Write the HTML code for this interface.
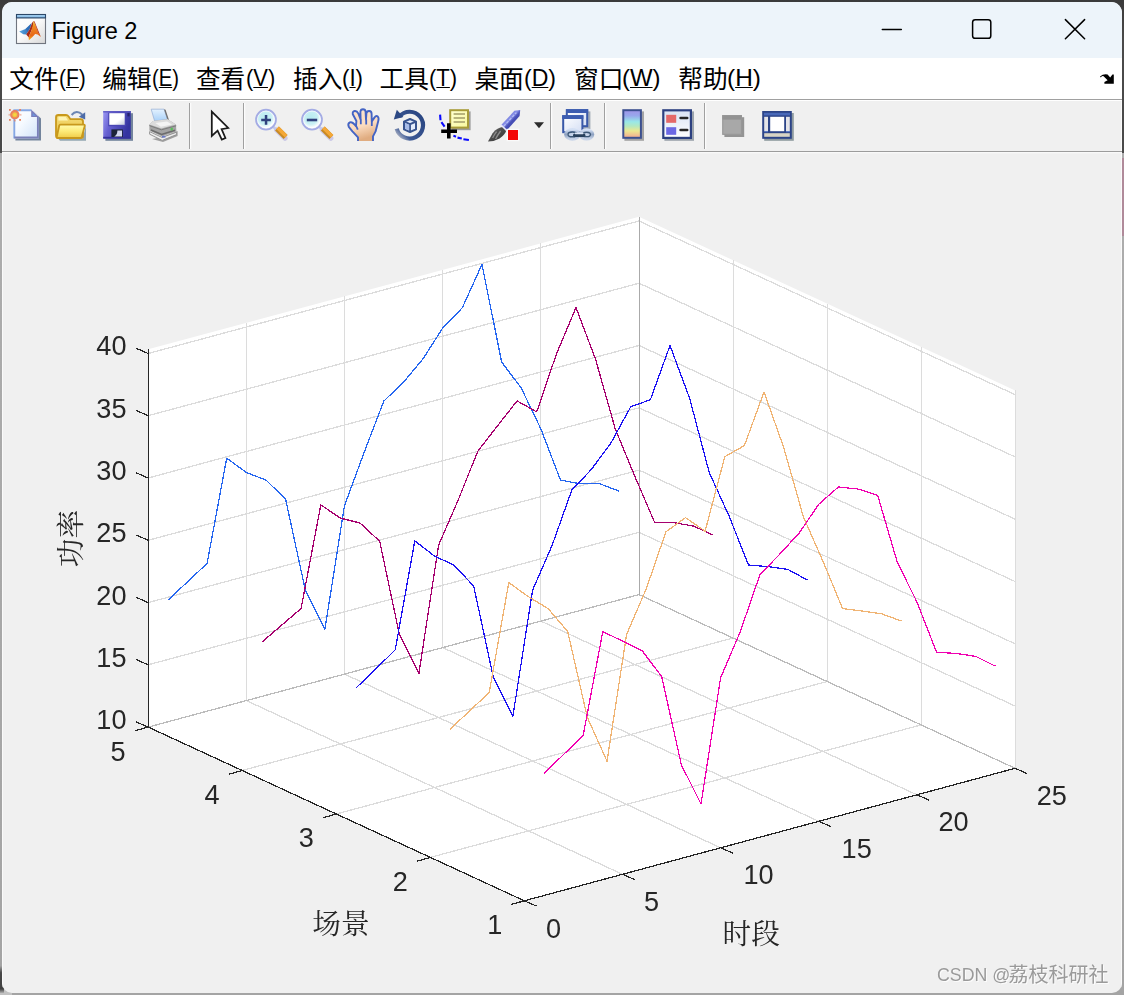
<!DOCTYPE html>
<html lang="zh-CN">
<head>
<meta charset="utf-8">
<title>Figure 2</title>
<style>
html,body{margin:0;padding:0}
body{width:1124px;height:995px;overflow:hidden;position:relative;
  background:linear-gradient(to bottom,#3a3a3a 0,#4a4a4a 40px,#4a4a4a 152.5px,#adadad 153.5px,#a4a4a4 100%);
  font-family:"Liberation Sans","Noto Sans CJK SC",sans-serif;}
.rb{position:absolute;left:1122px;top:158px;width:2px;height:78px;background:#b08a9a}
.win{position:absolute;left:2px;top:2px;width:1120px;height:991px;border-radius:10px 11px 10px 10px;background:#f0f0f0;overflow:hidden}
.title{position:absolute;left:0;top:0;width:1120px;height:55.5px;background:#edf4fa}
.title .cap{position:absolute;left:49.4px;top:15.3px;font-size:23.6px;line-height:28px;color:#000;letter-spacing:-0.08px;white-space:nowrap}
.menubar{position:absolute;left:0;top:55.5px;width:1120px;height:42px;background:#fff}
.menubar span{position:absolute;top:6px;font-size:24px;line-height:30px;color:#000;white-space:nowrap;transform-origin:0 0}
.menubar u{text-decoration:underline;text-underline-offset:1px;text-decoration-thickness:1.2px}
.menubar span.mc{font-size:24.7px;top:7.5px}
.menubar span.ml{top:5.6px}
.sep1{position:absolute;left:0;top:96.8px;width:1120px;height:1.3px;background:#a0a0a0}
.toolbar{position:absolute;left:0;top:98.1px;width:1120px;height:50.7px;background:#f0f0f0;border-top:1.2px solid #fff;box-sizing:border-box}
.sep2{position:absolute;left:0;top:148.8px;width:1120px;height:1.2px;background:#9c9c9c;box-shadow:0 1.2px 0 #fcfcfc}
.hl{position:absolute;top:99px;width:1px;height:892px;background:#fafafa}
.dk{position:absolute;left:0;top:966px;width:4px;height:27px;background:linear-gradient(to bottom,#a2a2a2,#484848 25%,#404040 85%,#b0b0b0)}
.lc{position:absolute;left:0;top:989px;width:12px;height:6px;background:#c2c2c2}
.vsep{position:absolute;top:1.5px;width:1.2px;height:46.2px;background:#a0a0a0;box-shadow:1.2px 0 0 #fff}
svg.ovl{position:absolute;left:0;top:0}
svg.plot{position:absolute;left:0;top:0;will-change:transform}
.wm{position:absolute;left:937px;top:961.1px;font-size:17.8px;line-height:26px;color:#9a9a9a;text-shadow:1px 1px 0 #fcfcfc;white-space:nowrap}
.wm b{font-weight:normal;font-size:20px;position:relative;top:1.3px;left:-1.8px}
</style>
</head>
<body>
<div class="rb"></div><div class="lc"></div><div class="dk"></div>
<div class="win">
  <div class="title"><div class="cap">Figure 2</div></div>
  <div class="menubar">
    <span class="mc" style="left:7.3px">文件</span><span class="ml" style="left:57.1px;transform:scaleX(0.875)">(<u>F</u>)</span>
    <span class="mc" style="left:100.2px">编辑</span><span class="ml" style="left:149.9px;transform:scaleX(0.841)">(<u>E</u>)</span>
    <span class="mc" style="left:193.9px">查看</span><span class="ml" style="left:243.6px;transform:scaleX(0.913)">(<u>V</u>)</span>
    <span class="mc" style="left:291.0px">插入</span><span class="ml" style="left:340.2px;transform:scaleX(0.927)">(<u>I</u>)</span>
    <span class="mc" style="left:377.5px">工具</span><span class="ml" style="left:427.2px;transform:scaleX(0.920)">(<u>T</u>)</span>
    <span class="mc" style="left:472.4px">桌面</span><span class="ml" style="left:522.2px;transform:scaleX(0.961)">(<u>D</u>)</span>
    <span class="mc" style="left:572.0px">窗口</span><span class="ml" style="left:620.4px;transform:scaleX(0.997)">(<u>W</u>)</span>
    <span class="mc" style="left:676.2px">帮助</span><span class="ml" style="left:724.9px;transform:scaleX(1.018)">(<u>H</u>)</span>
  </div>
  <div class="sep1"></div>
  <div class="toolbar">
    <div class="vsep" style="left:186.85px"></div>
    <div class="vsep" style="left:240.8px"></div>
    <div class="vsep" style="left:547.9px"></div>
    <div class="vsep" style="left:602.1px"></div>
    <div class="vsep" style="left:701.9px"></div>
  </div>
  <div class="hl" style="left:0"></div><div class="hl" style="left:1119px"></div>
  <div class="sep2"></div>
</div>
<svg class="plot" width="1124" height="995" viewBox="0 0 1124 995">
<polygon points="148.2,727.1 148.2,349.3 639,216.8 1015.1,390.4 1015.1,768.3 524.3,900.8" fill="#fff"/>
<g stroke="#dcdcdc" stroke-width="1.3" shape-rendering="crispEdges" fill="none">
<line stroke-width="1" x1="246.5" y1="700.6" x2="246.5" y2="322.8"/>
<line stroke-width="1" x1="344.5" y1="674.1" x2="344.5" y2="296.3"/>
<line stroke-width="1" x1="442.5" y1="647.6" x2="442.5" y2="269.8"/>
<line stroke-width="1" x1="540.5" y1="621.1" x2="540.5" y2="243.3"/>
<line x1="148.2" y1="664.8" x2="639" y2="532.3"/>
<line x1="148.2" y1="602.6" x2="639" y2="470.1"/>
<line x1="148.2" y1="540.3" x2="639" y2="407.8"/>
<line x1="148.2" y1="478" x2="639" y2="345.5"/>
<line x1="148.2" y1="415.7" x2="639" y2="283.2"/>
<line x1="148.2" y1="353.5" x2="639" y2="221"/>
<line stroke-width="1" x1="921.5" y1="724.9" x2="921.5" y2="347"/>
<line stroke-width="1" x1="827.5" y1="681.5" x2="827.5" y2="303.6"/>
<line stroke-width="1" x1="733.5" y1="638" x2="733.5" y2="260.2"/>
<line x1="639" y1="532.3" x2="1015.1" y2="706"/>
<line x1="639" y1="470.1" x2="1015.1" y2="643.8"/>
<line x1="639" y1="407.8" x2="1015.1" y2="581.5"/>
<line x1="639" y1="345.5" x2="1015.1" y2="519.2"/>
<line x1="639" y1="283.2" x2="1015.1" y2="456.9"/>
<line x1="639" y1="221" x2="1015.1" y2="394.6"/>
<line x1="622.5" y1="874.3" x2="246.4" y2="700.6"/>
<line x1="720.6" y1="847.8" x2="344.5" y2="674.1"/>
<line x1="818.8" y1="821.3" x2="442.7" y2="647.6"/>
<line x1="916.9" y1="794.8" x2="540.9" y2="621.1"/>
<line x1="430.3" y1="857.4" x2="921.1" y2="724.9"/>
<line x1="336.3" y1="814" x2="827.1" y2="681.5"/>
<line x1="242.2" y1="770.5" x2="733" y2="638"/>
<line stroke-width="1" x1="1015.5" y1="768.3" x2="1015.5" y2="390.4"/>
</g>
<g stroke="#bcbcbc" stroke-width="1.3" shape-rendering="crispEdges" fill="none">
<line x1="148.2" y1="727.1" x2="639" y2="594.6"/>
<line x1="639" y1="594.6" x2="1015.1" y2="768.3"/>
<line stroke="#aaaaaa" stroke-width="1" x1="639.5" y1="594.6" x2="639.5" y2="216.8"/>
</g>
<g stroke="#262626" stroke-width="1.25" fill="none" shape-rendering="crispEdges">
<line x1="148.2" y1="727.1" x2="148.2" y2="349.3"/>
<line x1="148.2" y1="727.1" x2="524.3" y2="900.8"/>
<line x1="524.3" y1="900.8" x2="1015.1" y2="768.3"/>
<line x1="148.2" y1="727.1" x2="136" y2="721.8"/>
<line x1="148.2" y1="664.8" x2="136" y2="659.5"/>
<line x1="148.2" y1="602.6" x2="136" y2="597.3"/>
<line x1="148.2" y1="540.3" x2="136" y2="535"/>
<line x1="148.2" y1="478" x2="136" y2="472.7"/>
<line x1="148.2" y1="415.7" x2="136" y2="410.4"/>
<line x1="148.2" y1="353.5" x2="136" y2="348.2"/>
<line x1="524.3" y1="900.8" x2="510.8" y2="904.6"/>
<line x1="430.3" y1="857.4" x2="416.8" y2="861.2"/>
<line x1="336.3" y1="814" x2="322.8" y2="817.8"/>
<line x1="242.2" y1="770.5" x2="228.7" y2="774.3"/>
<line x1="148.2" y1="727.1" x2="134.7" y2="730.9"/>
<line x1="524.3" y1="900.8" x2="536.5" y2="906.1"/>
<line x1="622.5" y1="874.3" x2="634.7" y2="879.6"/>
<line x1="720.6" y1="847.8" x2="732.8" y2="853.1"/>
<line x1="818.8" y1="821.3" x2="831" y2="826.6"/>
<line x1="916.9" y1="794.8" x2="929.1" y2="800.1"/>
<line x1="1015.1" y1="768.3" x2="1027.3" y2="773.6"/>
</g>
<g font-family="'Liberation Sans', Arial, sans-serif" font-size="27.1" fill="#262626">
<text x="126.5" y="729.1" text-anchor="end">10</text>
<text x="126.5" y="666.8" text-anchor="end">15</text>
<text x="126.5" y="604.5" text-anchor="end">20</text>
<text x="126.5" y="542.2" text-anchor="end">25</text>
<text x="126.5" y="480" text-anchor="end">30</text>
<text x="126.5" y="417.7" text-anchor="end">35</text>
<text x="126.5" y="355.4" text-anchor="end">40</text>
<text x="502.4" y="934" text-anchor="end">1</text>
<text x="407.8" y="890.6" text-anchor="end">2</text>
<text x="313.8" y="847.2" text-anchor="end">3</text>
<text x="219.7" y="803.7" text-anchor="end">4</text>
<text x="125.7" y="761.3" text-anchor="end">5</text>
<text x="545.9" y="937.8" text-anchor="start">0</text>
<text x="644.1" y="910.6" text-anchor="start">5</text>
<text x="743.4" y="884.1" text-anchor="start">10</text>
<text x="841.6" y="857.6" text-anchor="start">15</text>
<text x="938.5" y="831.1" text-anchor="start">20</text>
<text x="1036.7" y="804.6" text-anchor="start">25</text>
</g>
<g font-family="'Liberation Serif', 'Noto Serif CJK SC', serif" font-size="28.7" fill="#262626" text-anchor="middle">
<text x="340.9" y="933.6">场景</text>
<text x="751.2" y="943.9">时段</text>
<text transform="translate(80.7,538.5) rotate(-90)">功率</text>
</g>
<g fill="none" stroke-width="1.25" stroke-linejoin="round" shape-rendering="crispEdges">
<polyline stroke="#2566f0" points="167.9,600.2 187.5,581.8 207.1,563.4 226.7,458.2 246.4,472.5 266,480.1 285.6,499.1 305.3,590 324.9,629.3 344.5,505.6 364.2,452.2 383.8,401.1 403.4,382.3 423.1,358.7 442.7,328 462.3,307.8 482,264.3 501.6,362 521.2,388 540.9,429 560.5,480.1 580.1,483.8 599.8,483.8 619.4,491.2"/>
<polyline stroke="#a6006e" points="261.9,642.1 281.5,625.3 301.1,608.5 320.8,504.9 340.4,518.1 360,523 379.7,541.3 399.3,634.2 418.9,673.5 438.6,545.1 458.2,500 477.8,451.2 497.5,425.8 517.1,400.9 536.7,411.9 556.4,354.1 576,307.5 595.6,359.4 615.2,428.8 634.9,476.5 654.5,522.2 674.1,522.7 693.8,526.1 713.4,535.2"/>
<polyline stroke="#1c12f2" points="355.9,688.1 375.5,669.2 395.2,649.9 414.8,540.9 434.4,556 454.1,565.2 473.7,586.1 493.3,677.2 512.9,716.2 532.6,590.2 552.2,545.1 571.8,490.1 591.5,469.3 611.1,442.7 630.7,406.8 650.4,399.7 670,345.5 689.6,398.2 709.3,472.8 728.9,515.6 748.5,565 768.2,566.6 787.8,569.4 807.4,580"/>
<polyline stroke="#f0b474" points="449.9,729.3 469.5,711 489.2,692.5 508.8,582.6 528.4,596.7 548.1,608.6 567.7,631.5 587.3,717.3 607,761.2 626.6,634.4 646.2,589 665.9,531.9 685.5,517.6 705.1,531.2 724.8,456.7 744.4,445.6 764,392 783.7,447.5 803.3,516.6 822.9,561.1 842.6,608.6 862.2,611 881.8,613.9 901.4,621"/>
<polyline stroke="#f000b0" points="543.9,773.4 563.6,754.5 583.2,735.3 602.8,631.6 622.5,641.1 642.1,650.6 661.7,676.7 681.4,764.9 701,804 720.6,677.9 740.3,631.6 759.9,574.7 779.5,554.4 799.1,533.1 818.8,504.2 838.4,487 858,489 877.7,495.5 897.3,562.3 916.9,601.9 936.6,652.3 956.2,653.4 975.8,656.4 995.5,666.2"/>
</g>
</svg>
<svg class="ovl" width="1124" height="160" viewBox="0 0 1124 160">
<defs>
  <linearGradient id="gTb" x1="0" y1="0" x2="0" y2="1"><stop offset="0" stop-color="#b4dcf8"/><stop offset="1" stop-color="#78b0e0"/></linearGradient>
  <linearGradient id="gIc" x1="0" y1="0" x2="1" y2="1"><stop offset="0" stop-color="#ffffff"/><stop offset="0.45" stop-color="#fafafa"/><stop offset="1" stop-color="#d8d8d8"/></linearGradient>
  <linearGradient id="gWing" x1="0" y1="0" x2="1" y2="0"><stop offset="0" stop-color="#58a8e0"/><stop offset="1" stop-color="#2a64b0"/></linearGradient>
  <linearGradient id="gPeak" x1="0" y1="0" x2="0" y2="1"><stop offset="0" stop-color="#f8d020"/><stop offset="0.3" stop-color="#f08820"/><stop offset="0.75" stop-color="#e86818"/><stop offset="1" stop-color="#f8b818"/></linearGradient>
  <linearGradient id="gDoc" x1="0" y1="0" x2="1" y2="1"><stop offset="0" stop-color="#ffffff"/><stop offset="0.4" stop-color="#f6faff"/><stop offset="1" stop-color="#cfe2f8"/></linearGradient>
  <radialGradient id="gSun" cx="0.5" cy="0.5" r="0.5"><stop offset="0" stop-color="#f8e040"/><stop offset="0.45" stop-color="#f0c040"/><stop offset="0.6" stop-color="#ec8a5c"/><stop offset="1" stop-color="#e87858"/></radialGradient>
  <linearGradient id="gFoldB" x1="0" y1="0" x2="0" y2="1"><stop offset="0" stop-color="#f4dc78"/><stop offset="1" stop-color="#e8c040"/></linearGradient>
  <linearGradient id="gFoldF" x1="0" y1="0" x2="0" y2="1"><stop offset="0" stop-color="#fffcb0"/><stop offset="0.5" stop-color="#fcea78"/><stop offset="1" stop-color="#f0cc48"/></linearGradient>
  <linearGradient id="gFlop" x1="0" y1="0" x2="1" y2="0.3"><stop offset="0" stop-color="#9c98f4"/><stop offset="0.35" stop-color="#6660d0"/><stop offset="1" stop-color="#3434a0"/></linearGradient>
  <linearGradient id="gLab" x1="0" y1="0" x2="1" y2="1"><stop offset="0" stop-color="#ffffff"/><stop offset="0.6" stop-color="#ffffff"/><stop offset="1" stop-color="#c4ccdc"/></linearGradient>
  <linearGradient id="gPap" x1="0" y1="0" x2="0" y2="1"><stop offset="0" stop-color="#e4f2ff"/><stop offset="1" stop-color="#a8d0f8"/></linearGradient>
  <radialGradient id="gLens" cx="0.45" cy="0.4" r="0.6"><stop offset="0" stop-color="#b8ecf0"/><stop offset="0.55" stop-color="#c8f0f4"/><stop offset="0.85" stop-color="#ffffff"/><stop offset="1" stop-color="#e8ecff"/></radialGradient>
  <linearGradient id="gHand" x1="0" y1="0" x2="0.3" y2="1"><stop offset="0" stop-color="#fde6d0"/><stop offset="0.6" stop-color="#fbdcc0"/><stop offset="1" stop-color="#e0ac80"/></linearGradient>
  <linearGradient id="gRot" x1="0" y1="1" x2="1" y2="0"><stop offset="0" stop-color="#d0d0d4"/><stop offset="0.25" stop-color="#3c5894"/><stop offset="1" stop-color="#284480"/></linearGradient>
  <linearGradient id="gNote" x1="0" y1="0" x2="1" y2="1"><stop offset="0" stop-color="#ffffd0"/><stop offset="1" stop-color="#f8f8a0"/></linearGradient>
  <linearGradient id="gBrH" x1="0" y1="0" x2="1" y2="1"><stop offset="0" stop-color="#5058c0"/><stop offset="0.45" stop-color="#8890e8"/><stop offset="0.55" stop-color="#4850b8"/><stop offset="1" stop-color="#3038a0"/></linearGradient>
  <linearGradient id="gBrT" x1="0" y1="0" x2="1" y2="1"><stop offset="0" stop-color="#a0a0a0"/><stop offset="0.4" stop-color="#505050"/><stop offset="1" stop-color="#303030"/></linearGradient>
  <linearGradient id="gWinI" x1="0" y1="0" x2="1" y2="1"><stop offset="0" stop-color="#ffffff"/><stop offset="1" stop-color="#d4def4"/></linearGradient>
  <linearGradient id="gCb" x1="0" y1="0" x2="0" y2="1"><stop offset="0" stop-color="#a094e8"/><stop offset="0.2" stop-color="#98a8ec"/><stop offset="0.42" stop-color="#98e8e8"/><stop offset="0.58" stop-color="#b4e8c0"/><stop offset="0.75" stop-color="#ece890"/><stop offset="1" stop-color="#f4a890"/></linearGradient>
  <linearGradient id="gLeg" x1="0" y1="0" x2="0" y2="1"><stop offset="0" stop-color="#d8e2f4"/><stop offset="1" stop-color="#ffffff"/></linearGradient>
  <linearGradient id="gChain" x1="0" y1="0" x2="0" y2="1"><stop offset="0" stop-color="#d4e0f4"/><stop offset="0.5" stop-color="#8ca0c0"/><stop offset="1" stop-color="#c8d4e8"/></linearGradient>
</defs>
<g>
  <rect x="16.5" y="17.5" width="29" height="26" fill="url(#gIc)" stroke="#70757f" stroke-width="1.1"/>
  <rect x="16.5" y="14.5" width="29" height="3.4" fill="url(#gTb)" stroke="#2c4868" stroke-width="1.1"/>
  <path d="M19.2,31.6 L25.5,28.9 L31.6,23 L29.5,29.5 L26.2,34.4 L23.3,34.2 Z" fill="url(#gWing)"/>
  <path d="M25.6,28.8 L29.8,25.5 L31.6,23 L30.2,28 L27.5,31.5 Z" fill="#2c6cb8" opacity="0.7"/>
  <path d="M26.2,34.4 L29.5,29.5 L32.4,22.2 L33.6,21 L33.4,26 L31.2,31 L28.6,37.2 Z" fill="#a82c18"/>
  <path d="M28.6,37.2 L31.2,31 L33.2,24 L33.6,21 L35.6,25.6 L38.2,32.6 L40.9,37 L37.6,34.4 L35.2,33.9 L32.2,37.2 L28.9,40.3 Z" fill="url(#gPeak)"/>
  <path d="M33.6,21 L34.6,21.6 L37,27.6 L40.9,37 L38.2,32.8 L35.6,25.8 Z" fill="#b83018"/>
</g>
<g stroke="#000" stroke-width="1.5" fill="none" stroke-linecap="round">
  <line x1="882.3" y1="29.4" x2="901.3" y2="29.4"/>
  <rect x="972.6" y="19.7" width="18.2" height="18.6" rx="2.6" ry="2.6"/>
  <line x1="1065.4" y1="19.6" x2="1084.6" y2="38.8"/>
  <line x1="1084.6" y1="19.6" x2="1065.4" y2="38.8"/>
</g>
<path d="M1100,76.6 Q1103.5,73.6 1107.6,74.6 L1110.2,77.4 L1112.4,74.4 L1113.8,74.4 L1113.8,83.8 L1104.4,83.8 L1104.4,82 L1107.6,80.2 L1103.6,76.2 Q1102,75.8 1100.8,77.4 Z" fill="#000"/>
<g>
  <!-- new -->
  <path d="M15.4,111.4 H33.8 L41,118.6 V140.6 H15.4 Z" fill="#73849c"/>
  <path d="M13.4,109.4 H31.8 L38.8,116.4 V138.4 H13.4 Z" fill="url(#gDoc)"/>
  <path d="M14.3,138.4 V110.3 H31.4" fill="none" stroke="#86a8e4" stroke-width="1.9"/>
  <path d="M14.3,137.5 H37.9 V116.6" fill="none" stroke="#7a80b8" stroke-width="1.9"/>
  <path d="M31.2,109.4 L38.8,117 H31.2 Z" fill="#7a7cba"/>
  <path d="M32.6,112.8 L35.8,116 H32.6 Z" fill="#6a94dc"/>
  <g fill="#e8805c">
    <circle cx="14.8" cy="114.8" r="4.7" fill="url(#gSun)"/>
    <rect x="9" y="109" width="1.8" height="1.8"/><rect x="19.2" y="109" width="1.8" height="1.8"/>
    <rect x="8.6" y="113.9" width="1.2" height="1.8" opacity="0.6"/><rect x="20.2" y="113.9" width="1.2" height="1.8" opacity="0.6"/>
    <rect x="9" y="119" width="1.8" height="1.8"/><rect x="13.9" y="120" width="1.8" height="1.4" opacity="0.7"/><rect x="19.2" y="119" width="1.8" height="1.8"/>
  </g>
  <!-- open -->
  <path d="M58,138.6 H82.6 L86,125.6 V140.8 H60 Z" fill="#8aa0ac" opacity="0.9"/>
  <path d="M71.6,115 Q76.6,109.4 82.2,114.6" fill="none" stroke="#6c86b4" stroke-width="2"/>
  <path d="M78.8,116.8 L85.2,112.2 L85.2,119.4 Z" fill="#4e6ca8"/>
  <path d="M56,117.4 Q56,115 58.4,115 H66 Q67.6,115 68.6,116.4 L70.4,119.2 H80.6 Q83,119.2 83,121.6 V136 Q83,138 81,138 H58.4 Q56,138 56,135.6 Z" fill="url(#gFoldB)" stroke="#c8981c" stroke-width="1.8"/>
  <path d="M58.4,117 H65.8 L68,120.6 H58.4 Z" fill="#fdf4b4"/>
  <path d="M60.4,124.6 H84 Q85,124.6 84.8,125.8 L81.8,136.8 Q81.4,138 80,138 H57.6 Q56.4,138 56.8,136.8 L59.2,125.8 Q59.4,124.6 60.4,124.6 Z" fill="url(#gFoldF)" stroke="#c8981c" stroke-width="1.8"/>
  <!-- save -->
  <rect x="105.4" y="113.2" width="27.6" height="27.6" fill="#73849c"/>
  <rect x="103.2" y="111" width="27.6" height="27.6" fill="url(#gFlop)"/>
  <rect x="103.2" y="111" width="27.6" height="1.6" fill="#5c58c0" opacity="0.8"/>
  <rect x="103.2" y="136.8" width="27.6" height="1.8" fill="#34309c"/>
  <rect x="108.2" y="112.8" width="17.4" height="13.4" fill="#4a46b4"/>
  <rect x="109.3" y="113.2" width="15.4" height="11.6" fill="url(#gLab)"/>
  <rect x="127.4" y="113" width="2.2" height="3.4" fill="#26226c"/>
  <rect x="111.4" y="129.4" width="11.4" height="7.6" fill="#1c2438"/>
  <path d="M117.4,130.4 H122 V136.6 H114.2 Q117.4,134.6 117.4,130.4 Z" fill="#d4d8f0"/>
  <!-- print -->
  <path d="M152,139 L163,142 L177.6,136 L177.6,131 L163,137 Z" fill="#8c8c8c" opacity="0.8"/>
  <path d="M151.2,109.2 H164 L167.4,119.4 L154.6,121 Z" fill="url(#gPap)" stroke="#9cb4d8" stroke-width="0.8"/>
  <path d="M164,109.2 L165.6,109.8 L169,120 L167.4,119.4 Z" fill="#707070"/>
  <path d="M153,121 L167.6,119.2 L176,124.6 L176.4,131.4 L162,136.4 L149.4,130.4 L149.4,124.4 Z" fill="#a4a4a4"/>
  <path d="M153,121 L167.6,119.2 L176,124.6 L161.4,128.6 L149.4,124.4 Z" fill="#dcdcdc"/>
  <path d="M155.4,123 L167,121.4 L172.2,124.6 L160.8,126.8 Z" fill="#f4f4f4"/>
  <path d="M149.4,125.6 L161.4,129.8 L176.2,125.8" fill="none" stroke="#7c7c7c" stroke-width="1"/>
  <path d="M149.6,131.6 L162,137.4 L176.6,132.2 L176.6,134.6 L162.2,140.4 L149.6,134.2 Z" fill="#ececec" stroke="#8c8c8c" stroke-width="0.9"/>
  <path d="M151,130 L161.6,134.4 L175,130.2" fill="none" stroke="#6c6c6c" stroke-width="1.6"/>
  <rect x="170.6" y="127.8" width="2.2" height="2.6" fill="#58c058"/>
  <rect x="162" y="135.8" width="3.4" height="1.8" fill="#6878c8"/>
</g>
<g>
  <!-- pointer -->
  <path d="M211.8,111.6 V136 L217.6,130.6 L221.8,139.6 L225.4,138 L221.6,129.2 L228.2,128 Z" fill="#fff" stroke="#1a1a1a" stroke-width="1.75" stroke-linejoin="miter"/>
  <!-- zoom in -->
  <line x1="276.6" y1="130" x2="285" y2="138.2" stroke="#b4b0e0" stroke-width="5.2" stroke-linecap="round" opacity="0.6"/>
  <line x1="272.6" y1="126.2" x2="277" y2="130.4" stroke="#c4c8ec" stroke-width="2.6"/>
  <line x1="277" y1="128.6" x2="285.6" y2="137" stroke="#c88a24" stroke-width="5.6" stroke-linecap="butt"/>
  <line x1="277.6" y1="127.8" x2="286.2" y2="136.2" stroke="#f4a838" stroke-width="3.6" stroke-linecap="butt"/>
  <circle cx="266" cy="119.6" r="9.8" fill="url(#gLens)" stroke="#a4ace4" stroke-width="2.1"/>
  <circle cx="266" cy="119.6" r="8.6" fill="none" stroke="#ffffff" stroke-width="0.9" opacity="0.8"/>
  <path d="M261.2,119.9 H270.9 M266.05,115 V124.8" stroke="#30427e" stroke-width="2.5" fill="none"/>
  <!-- zoom out -->
  <line x1="322.4" y1="130" x2="330.8" y2="138.2" stroke="#b4b0e0" stroke-width="5.2" stroke-linecap="round" opacity="0.6"/>
  <line x1="318.6" y1="126.2" x2="323" y2="130.4" stroke="#c4c8ec" stroke-width="2.6"/>
  <line x1="322.8" y1="128.6" x2="331.4" y2="137" stroke="#c88a24" stroke-width="5.6" stroke-linecap="butt"/>
  <line x1="323.4" y1="127.8" x2="332" y2="136.2" stroke="#f4a838" stroke-width="3.6" stroke-linecap="butt"/>
  <circle cx="312" cy="119.6" r="9.8" fill="url(#gLens)" stroke="#a4ace4" stroke-width="2.1"/>
  <circle cx="312" cy="119.6" r="8.6" fill="none" stroke="#ffffff" stroke-width="0.9" opacity="0.8"/>
  <path d="M306.8,120 H317.2" stroke="#30427e" stroke-width="2.6" fill="none"/>
  <!-- hand -->
  <path d="M358,141 V137.4 L352.4,131.4 L348.8,126.8 Q347.4,123.6 349.8,122.4 Q352.6,121.6 356,126.2 L356.4,121 L352.8,114.2 Q352.2,111.4 354.8,111 Q357,110.8 358.4,113.6 L360.6,119.4 L360.4,111.8 Q360.6,109.2 363,109.2 Q365.4,109.2 365.6,111.8 L366,119.4 L366.4,113.4 Q366.8,110.8 369.2,111 Q371.6,111.2 371.6,113.8 L371.8,121.4 L374.4,117.6 Q376,115.4 377.6,116.4 Q379.2,117.8 378.2,121.2 L375.6,131.4 L373,136.4 V141 Z" fill="url(#gHand)"/>
  <path d="M358,141 V137.4 L352.4,131.4 L348.8,126.8 Q347.4,123.6 349.8,122.4 Q352.6,121.6 356,126.2 L356.4,121 L352.8,114.2 Q352.2,111.4 354.8,111 Q357,110.8 358.4,113.6 L360.6,119.4 L360.4,111.8 Q360.6,109.2 363,109.2 Q365.4,109.2 365.6,111.8 L366,119.4 L366.4,113.4 Q366.8,110.8 369.2,111 Q371.6,111.2 371.6,113.8 L371.8,121.4 L374.4,117.6 Q376,115.4 377.6,116.4 Q379.2,117.8 378.2,121.2 L375.6,131.4 L373,136.4 V141" fill="none" stroke="#4464c4" stroke-width="1.9" stroke-linejoin="round"/>
  <path d="M360.8,119.6 V124.2 M366.2,119.6 V124.4 M371.8,121.6 V126 M356.2,126 L357.8,129.6" stroke="#4464c4" stroke-width="1.8" fill="none"/>
</g>
<g>
  <!-- rotate 3d -->
  <path d="M399.3,116.6 A13.4,13.4 0 1 1 396.7,128.7" fill="none" stroke="url(#gRot)" stroke-width="4.2"/>
  <path d="M393.8,119.4 L396.8,109.8 L403.4,117 Z" fill="#2c4884"/>
  <path d="M404,121.6 L410,119 L416,121.6 V129.4 L410,132 L404,129.4 Z" fill="#e4ecfc" stroke="#38548f" stroke-width="2" stroke-linejoin="round"/>
  <path d="M404,121.6 L410,124.2 L416,121.6 M410,124.2 V132" fill="none" stroke="#38548f" stroke-width="1.9"/>
  <path d="M405,122.8 L409.2,124.8 V130.6 L405,128.8 Z" fill="#a8bce8"/>
  <!-- data cursor -->
  <rect x="451.4" y="111.4" width="19.2" height="18.8" fill="#9c9c9c"/>
  <rect x="450.2" y="110.2" width="17.8" height="17.4" fill="url(#gNote)" stroke="#a89c38" stroke-width="2"/>
  <path d="M453.6,114 H465 M453.6,118 H465 M453.6,122 H465" stroke="#b8b47c" stroke-width="1.8" fill="none"/>
  <path d="M441.2,131.2 H457 M448.8,123.2 V138.6" stroke="#000" stroke-width="3.6" fill="none"/>
  <path d="M440.1,114.6 L440.5,120.2 M441.4,122.2 L444.6,126.6 M453.4,135.6 L456,136.7 M457.5,137.6 L461.8,138.5 M463.4,139.3 L468.9,140" stroke="#0808ff" stroke-width="2.1" fill="none" stroke-linecap="butt"/>
  <!-- brush -->
  <path d="M503.6,126.8 Q497,127.4 492.6,133.2 Q490.2,137.4 488,141.6 Q494.4,141.6 499.6,138.6 Q506,134 506.4,129.6 Z" fill="url(#gBrT)"/>
  <path d="M496.6,131.6 Q494.2,134.6 492.6,138 M500.6,131 Q497.6,135 495.6,139" stroke="#9c9c9c" stroke-width="1.3" fill="none" opacity="0.8"/>
  <path d="M501.2,125 L514.4,110.8 L520.2,110 L519.6,116 L506.6,130.4 Z" fill="url(#gBrH)"/>
  <path d="M503.6,126.4 L516.4,112.6" stroke="#b4bcf4" stroke-width="1.3" fill="none" stroke-dasharray="3 1.2"/>
  <path d="M501,125 L506.8,130.6" stroke="#e8e8f8" stroke-width="1.6"/>
  <rect x="506.6" y="128.8" width="12.8" height="12.4" fill="#fafafa"/>
  <rect x="508" y="130" width="10" height="10" fill="#f40808"/>
  <!-- dropdown -->
  <path d="M534,122.2 H544 L539,128.2 Z" fill="#2c2c2c"/>
</g>
<g>
  <!-- link -->
  <rect x="568" y="111.4" width="22.4" height="17.6" fill="#8c98a8" opacity="0.8"/>
  <rect x="566.8" y="110.2" width="20.4" height="16" fill="url(#gWinI)" stroke="#3858a8" stroke-width="2"/>
  <rect x="566" y="109.2" width="22.2" height="3.8" fill="#3c5cb0"/>
  <rect x="563.2" y="116.2" width="19.2" height="16" fill="url(#gWinI)" stroke="#3858a8" stroke-width="2"/>
  <rect x="562.2" y="115.2" width="21.2" height="3.8" fill="#3c5cb0"/>
  <ellipse cx="586.6" cy="134.4" rx="6" ry="4.4" fill="none" stroke="url(#gChain)" stroke-width="3.4"/>
  <ellipse cx="572.4" cy="134.4" rx="6.6" ry="4.6" fill="none" stroke="url(#gChain)" stroke-width="3.4"/>
  <ellipse cx="572.4" cy="134.4" rx="4.4" ry="2.4" fill="#c4d2e8" stroke="#3c5878" stroke-width="1.4"/>
  <ellipse cx="586.6" cy="134.4" rx="3.8" ry="2.2" fill="#c4d2e8" stroke="#3c5878" stroke-width="1.4"/>
  <rect x="573" y="133.6" width="12.4" height="3.4" rx="1.7" fill="#28405c"/>
  <rect x="574.6" y="132.6" width="9" height="1.6" rx="0.8" fill="#dce6f6"/>
  <!-- colorbar -->
  <rect x="624.4" y="111.4" width="19.6" height="29.4" fill="#a4a4a4"/>
  <rect x="623.3" y="110.2" width="17.6" height="27.6" fill="url(#gCb)" stroke="#3c5090" stroke-width="2"/>
  <!-- legend -->
  <rect x="664.4" y="111.4" width="29.6" height="29.4" fill="#9ca4ac"/>
  <rect x="663.3" y="110.3" width="27.6" height="27.6" fill="url(#gLeg)" stroke="#2c4080" stroke-width="2.2"/>
  <rect x="666.2" y="114.8" width="10" height="8" fill="#e46868"/>
  <rect x="666.2" y="127.2" width="10" height="7.6" fill="#6c68e4"/>
  <path d="M680.6,118 H687.2 M680.6,130 H687.2" stroke="#262626" stroke-width="2.6" stroke-linecap="round" fill="none"/>
  <!-- gray window -->
  <rect x="724.4" y="117.2" width="19.8" height="19.8" fill="#949494"/>
  <rect x="722.3" y="115.2" width="19.6" height="19.6" fill="#a8a8a8"/>
  <rect x="722.3" y="115.2" width="19.6" height="4.4" fill="#929292"/>
  <rect x="722.8" y="115.7" width="18.6" height="18.6" fill="none" stroke="#969696" stroke-width="1"/>
  <!-- plot tools -->
  <rect x="764.2" y="113" width="29.6" height="27.8" fill="#909ca0"/>
  <rect x="762.2" y="111" width="29.6" height="27.8" fill="#2c4488"/>
  <rect x="764" y="112.8" width="26" height="2.6" fill="#4868b8"/>
  <rect x="770.2" y="116.8" width="14" height="14.4" fill="#ffffff"/>
  <rect x="764.2" y="116.8" width="3.8" height="14.4" fill="#e4e4e8"/>
  <rect x="786" y="116.8" width="3.8" height="14.4" fill="#e4e4e8"/>
  <rect x="764.2" y="131.2" width="3.8" height="1" fill="#6080d0"/><rect x="786" y="131.2" width="3.8" height="1" fill="#6080d0"/>
  <rect x="764.2" y="133.2" width="25.6" height="3.6" fill="#d8d4c4"/>
</g>
</svg>

<div class="wm">CSDN @<b>荔枝科研社</b></div>
</body>
</html>
